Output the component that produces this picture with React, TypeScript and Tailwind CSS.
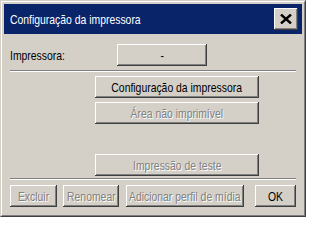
const face = "bg-[#d4d0c8]";
const bevel =
  "shadow-[inset_-1px_-1px_0_#404040,inset_1px_1px_0_#ffffff,inset_-2px_-2px_0_#808080]";

// the dialog font is a narrow sans: Liberation Sans squeezed horizontally
function Txt({ children, left }: { children: React.ReactNode; left?: boolean }) {
  return (
    <span
      className={`inline-block whitespace-nowrap scale-x-[0.8] ${left ? "origin-left" : "origin-center"}`}
    >
      {children}
    </span>
  );
}

function Btn({
  label,
  w,
  disabled,
  className = "",
}: {
  label: string;
  w: string;
  disabled?: boolean;
  className?: string;
}) {
  return (
    <div
      className={`${w} h-[22px] ${face} ${bevel} flex items-center justify-center ${
        disabled ? "text-[#808080] [text-shadow:1px_1px_0_#ffffff]" : "text-black"
      } ${className}`}
    >
      <Txt>{label}</Txt>
    </div>
  );
}

function Separator() {
  return <div className="h-[2px] border-t border-t-[#808080] border-b border-b-white" />;
}

export default function App() {
  return (
    <div
      className="w-[306px] h-[217px] border border-t-[#d4d0c8] border-l-[#d4d0c8] border-b-[#404040] border-r-[#404040] text-[13px] leading-none"
      style={{ fontFamily: '"Liberation Sans", Arial, sans-serif' }}
    >
      <div className="h-full border border-t-white border-l-white border-b-[#808080] border-r-[#808080] bg-[#d4d0c8] p-[2px]">
        {/* title bar */}
        <div className="h-[30px] bg-[#0a246a] flex items-center justify-between pl-[6px] pr-[4px]">
          <span className="text-white">
            <Txt left>Configuração da impressora</Txt>
          </span>
          <div className={`w-[24px] h-[22px] ${face} ${bevel} flex items-center justify-center`}>
            <svg width="12" height="10" viewBox="0 0 12 10">
              <path d="M1 0.5 L11 9.5 M11 0.5 L1 9.5" stroke="#000" strokeWidth="2.4" />
            </svg>
          </div>
        </div>

        {/* body */}
        <div className="px-[6px]">
          <div className="mt-[10px] h-[22px] flex items-center">
            <span className="w-[107px]">
              <Txt left>Impressora:</Txt>
            </span>
            <Btn label="-" w="w-[90px]" />
          </div>

          <div className="mt-[4px]">
            <Separator />
          </div>

          <div className="ml-[85px] mt-[4px] flex flex-col gap-[4px]">
            <Btn label="Configuração da impressora" w="w-[164px]" />
            <Btn label="Área não imprimível" w="w-[164px]" disabled />
          </div>

          <div className="ml-[85px] mt-[30px]">
            <Btn label="Impressão de teste" w="w-[164px]" disabled />
          </div>

          <div className="mt-[2px]">
            <Separator />
          </div>

          <div className="mt-[5px] flex">
            <Btn label="Excluir" w="w-[47px]" disabled />
            <Btn label="Renomear" w="w-[56px]" disabled className="ml-[6px]" />
            <Btn label="Adicionar perfil de mídia" w="w-[118px]" disabled className="ml-[7px]" />
            <Btn label="OK" w="w-[41px]" className="ml-[11px]" />
          </div>
        </div>
      </div>
    </div>
  );
}
